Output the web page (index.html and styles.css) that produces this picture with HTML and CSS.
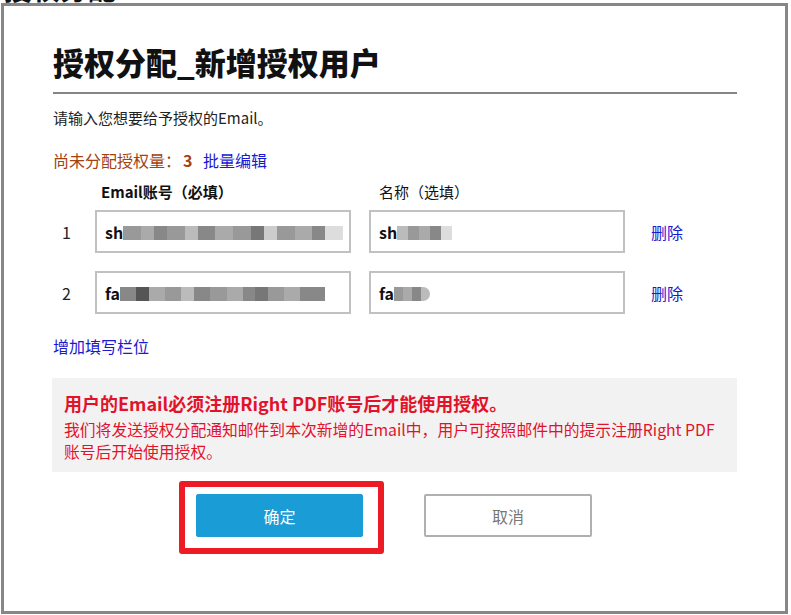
FILE: index.html
```html
<!DOCTYPE html>
<html lang="zh-CN">
<head>
<meta charset="utf-8">
<title>授权分配</title>
<link rel="stylesheet" href="styles.css">
</head>
<body>
<div class="page-title">授权分配</div>

<div class="dialog">
  <h1 class="title">授权分配_新增授权用户</h1>
  <div class="rule"></div>
  <p class="intro">请输入您想要给予授权的Email。</p>
  <div class="quota">
    <span class="quota-label">尚未分配授权量：</span>
    <span class="quota-num">3</span>
    <a class="link">批量编辑</a>
  </div>

  <div class="grid">
    <div></div>
    <div class="head head-email">Email账号（必填）</div>
    <div class="head head-name">名称（选填）</div>
    <div></div>

    <div class="num">1</div>
    <div class="field"><span class="val">sh</span><span class="blur blur-e1"></span></div>
    <div class="field"><span class="val">sh</span><span class="blur blur-n1"></span></div>
    <a class="link del">删除</a>

    <div class="num">2</div>
    <div class="field"><span class="val">fa</span><span class="blur blur-e2"></span></div>
    <div class="field"><span class="val">fa</span><span class="blur blur-n2"></span></div>
    <a class="link del">删除</a>
  </div>

  <a class="link add">增加填写栏位</a>

  <div class="notice">
    <div class="notice-title">用户的Email必须注册Right PDF账号后才能使用授权。</div>
    <div class="notice-text">我们将发送授权分配通知邮件到本次新增的Email中，用户可按照邮件中的提示注册Right PDF<br>账号后开始使用授权。</div>
  </div>

  <div class="actions">
    <div class="confirm-wrap">
      <button class="btn btn-primary">确定</button>
      <div class="highlight"></div>
    </div>
    <button class="btn btn-cancel">取消</button>
  </div>
</div>
</body>
</html>
```

FILE: styles.css
```css
* { box-sizing: border-box; }

html, body {
  margin: 0;
  padding: 0;
  background: #ffffff;
  width: 791px;
  height: 615px;
  overflow: hidden;
}

body {
  font-family: "Noto Sans CJK SC", "Noto Sans", sans-serif;
  color: #222;
  position: relative;
}

.page-title {
  font-size: 28px;
  font-weight: bold;
  line-height: 28px;
  margin: -26px 0 0 4px;
  color: #111;
}

.dialog {
  position: absolute;
  left: 1px;
  top: 3px;
  width: 787px;
  height: 611px;
  border: 3px solid #878787;
  background: #fff;
  padding: 36px 49px 0 49px;
}

.title {
  margin: 0;
  font-size: 31px;
  line-height: 40px;
  font-weight: 900;
  color: #111;
}

.rule {
  height: 2px;
  background: #858585;
  margin-top: 10px;
  margin-right: -1px;
}

.intro {
  margin: 14px 0 0;
  font-size: 15px;
  line-height: 20px;
  color: #222;
}

.quota {
  margin-top: 22px;
  font-size: 16px;
  line-height: 20px;
  display: flex;
  align-items: center;
}

.quota-label { color: #a3410f; }
.quota-num { color: #a3410f; font-weight: bold; margin-left: 2px; width: 20px; }

.link {
  color: #1a1ad0;
  font-size: 16px;
  cursor: pointer;
}

.grid {
  margin-top: 12px;
  display: grid;
  grid-template-columns: 24px 256px 256px auto;
  column-gap: 18px;
  row-gap: 18px;
  align-items: center;
}

.head {
  font-size: 15px;
  line-height: 20px;
  margin-bottom: -10px;
  color: #111;
}
.head-email { font-weight: bold; padding-left: 6px; }
.head-name { padding-left: 10px; }

.num {
  font-size: 16px;
  padding-left: 9px;
  color: #222;
}

.field {
  height: 43px;
  border: 2px solid #c1c1c1;
  background: #fff;
  display: flex;
  align-items: center;
  padding-left: 8px;
}

.val {
  font-weight: bold;
  font-size: 16px;
  color: #111;
}

.blur {
  display: inline-block;
  height: 14px;
  margin-top: 2px;
}

.blur-e1 {
  width: 220px;
  background: linear-gradient(90deg,
    #999 0 8%, #aaa 8% 14%, #888 14% 20%, #999 20% 28%, #bbb 28% 34%,
    #888 34% 42%, #aaa 42% 50%, #999 50% 58%, #777 58% 64%, #ccc 64% 70%,
    #999 70% 78%, #aaa 78% 86%, #888 86% 92%, #ddd 92% 100%);
}
.blur-e2 {
  width: 205px;
  background: linear-gradient(90deg,
    #888 0 8%, #555 8% 14%, #aaa 14% 22%, #999 22% 30%, #bbb 30% 36%,
    #888 36% 44%, #999 44% 52%, #aaa 52% 60%, #888 60% 66%, #777 66% 72%,
    #999 72% 80%, #aaa 80% 88%, #888 88% 100%);
}
.blur-n1 {
  width: 55px;
  background: linear-gradient(90deg,
    #bbb 0 20%, #999 20% 40%, #aaa 40% 60%, #888 60% 80%, #ddd 80% 100%);
}
.blur-n2 {
  width: 36px;
  border-radius: 0 7px 7px 0;
  background: linear-gradient(90deg,
    #999 0 25%, #aaa 25% 50%, #888 50% 75%, #bbb 75% 100%);
}

.del {
  margin-left: 8px;
  line-height: 20px;
}

.add {
  display: block;
  margin-top: 22px;
  line-height: 20px;
}

.notice {
  margin: 22px -1px 0 -1px;
  background: #f2f2f2;
  padding: 13px 12px 9px 12px;
  color: #e3122b;
}

.notice-title {
  font-size: 18px;
  line-height: 24px;
  font-weight: bold;
}

.notice-text {
  margin-top: 4px;
  font-size: 15.8px;
  line-height: 22px;
  white-space: nowrap;
}

.actions {
  margin-top: 22px;
  margin-left: 143px;
  display: flex;
  gap: 61px;
}

.confirm-wrap {
  position: relative;
}

.btn {
  width: 167px;
  height: 43px;
  font-family: inherit;
  font-size: 16px;
  border-radius: 2px;
  cursor: pointer;
}

.btn-primary {
  background: #1a9cd6;
  color: #fff;
  border: 1px solid #1a9cd6;
}

.btn-cancel {
  width: 168px;
  background: #fff;
  color: #777;
  border: 2px solid #b0b0b0;
}

.highlight {
  position: absolute;
  left: -17px;
  top: -13px;
  width: 205px;
  height: 73px;
  border: 6px solid #ed1c24;
  border-radius: 3px;
  pointer-events: none;
}
```
